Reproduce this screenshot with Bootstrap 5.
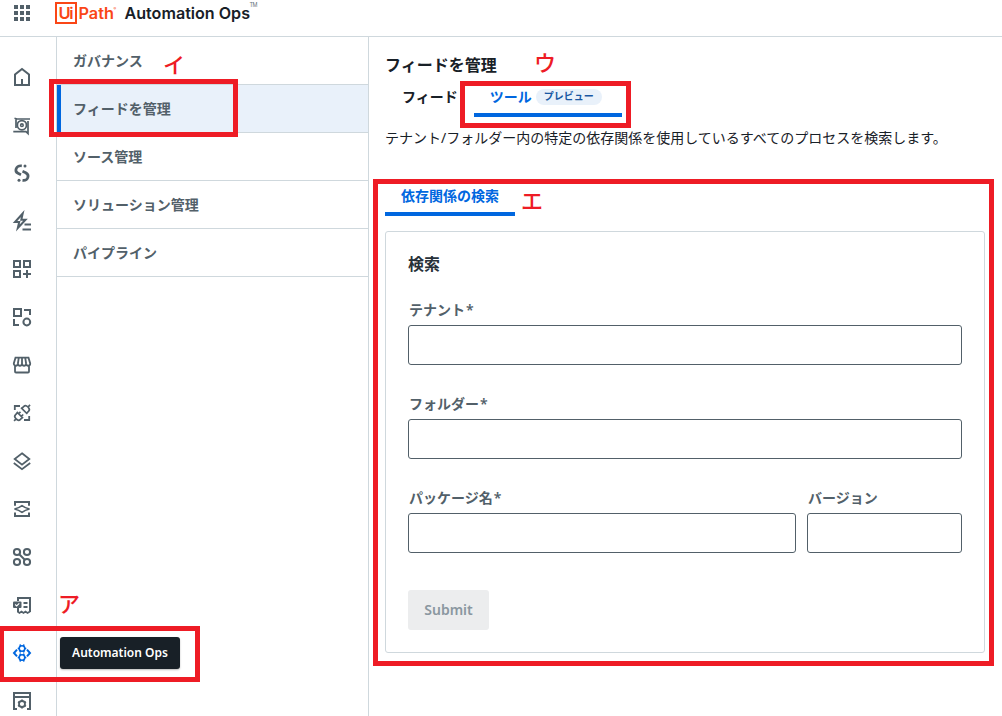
<!DOCTYPE html>
<html lang="ja">
<head>
<meta charset="utf-8">
<meta name="viewport" content="width=device-width, initial-scale=1">
<title>Automation Ops</title>
<link rel="stylesheet" href="https://cdn.jsdelivr.net/npm/bootstrap@5.3.0/dist/css/bootstrap.min.css">
<style>
:root{--line:#cfd8dd;--slate:#526069;--ink:#182027;--blue:#0067df;--pale:#e9f1fa;--red:#ee1c25}
body{font-family:"Noto Sans","Noto Sans CJK JP",sans-serif;font-size:14px;line-height:20px;color:var(--ink);width:1002px;height:716px;overflow:hidden;position:relative}
.topbar{height:37px;border-bottom:1px solid var(--line)}
.topbar svg{display:block}
.shell{height:679px}
.rail{width:57px;border-right:1px solid var(--line);padding-top:16px;overflow:hidden}
.rail a{height:48px;flex-shrink:0;padding-left:10px;color:var(--slate)}
.rail a.active{color:var(--blue)}
.rail svg{width:24px;height:24px;fill:none;stroke:currentColor;stroke-width:2}
.sections{width:312px;border-right:1px solid var(--line)}
.sections .list-group-item{height:48px;border:0;border-bottom:1px solid var(--line)!important;padding:0 16px;color:var(--slate);font-weight:600;border-radius:0}
.sections .list-group-item.active{background:var(--pale);color:var(--slate);box-shadow:inset 4px 0 var(--blue);margin:0;z-index:0}
.workspace{padding:0 16px;flex:1}
h1{font-size:16px;line-height:24px;font-weight:600;margin:16px 0 0}
.tabs{height:40px}
.tabs .nav-link{padding:10px 16px 0;color:var(--ink);font-weight:600;height:40px;border-bottom:4px solid transparent;white-space:nowrap;line-height:20px}
.tabs .nav-link.active{color:var(--blue);border-color:var(--blue)}
.preview{background:var(--pale);color:#1a58a3;font-size:10px;line-height:15px;font-weight:600;border-radius:8px;padding:0 8px;height:16px;margin:2px 4px 0 0}
.search-box{width:600px;height:422px;border:1px solid var(--line);border-radius:3px;padding:0 22px;margin-top:15px}
.search-box h2{font-size:16px;line-height:24px;font-weight:600;color:#273139;margin:20px 0 24px}
.search-box .form-label{font-size:14px;line-height:20px;font-weight:600;color:var(--slate);margin:0 0 5px 1px;display:block}
.search-box .form-label span{letter-spacing:1px;margin-left:1px}
.search-box .form-control{height:40px;border:1px solid var(--slate);border-radius:3px}
.field{height:94px}
.submit{width:81px;height:40px;border:0;border-radius:3px;background:#ecedee!important;color:#8a97a0!important;font-size:14px;line-height:20px;font-weight:600;opacity:1!important;padding:0 0 1px;display:block;margin-top:8px}
.frame{position:absolute;border:5px solid var(--red);pointer-events:none;z-index:5}
.letter{position:absolute;color:var(--red);font:500 22px/24px "Noto Sans CJK JP",sans-serif}
.tip{position:absolute;left:60px;top:637px;width:120px;height:32px;border-radius:3px;background:#182027;color:#fff;font-size:12px;line-height:32px;font-weight:600;text-align:center;box-shadow:0 1px 2px #0004}
</style>
</head>
<body class="bg-white">
<header class="topbar">
<svg width="300" height="36" role="img" aria-label="UiPath Automation Ops">
<path fill="#526069" d="M14 5h4v4h-4zm6 0h4v4h-4zm6 0h4v4h-4zM14 11h4v4h-4zm6 0h4v4h-4zm6 0h4v4h-4zM14 17h4v4h-4zm6 0h4v4h-4zm6 0h4v4h-4z"/>
<rect x="56" y="3" width="20" height="20" fill="none" stroke="#fa4616" stroke-width="2"/>
<g font-family="Inter,sans-serif" font-weight="600">
<text x="58.5" y="18.8" font-size="16.5" fill="#fa4616" textLength="15">Ui</text>
<text x="78.5" y="18.8" font-size="15.5" fill="#fa4616" textLength="35.5" lengthAdjust="spacingAndGlyphs">Path</text>
<text x="113.500" y="9.500" font-size="4" fill="#fa4616">®</text>
<text x="124.500" y="19" font-size="16" fill="#182027" textLength="125.500" lengthAdjust="spacingAndGlyphs">Automation Ops</text>
<text x="249.500" y="7" font-size="5.500" font-weight="400" fill="#69757d" textLength="8">TM</text>
</g>
</svg>
</header>
<div class="d-flex shell">
<nav class="rail d-flex flex-column flex-shrink-0" aria-label="サービス">
<a class="d-flex align-items-center"><svg viewBox="0 0 24 24"><path d="M5 20V9.500L12 4l7 5.500V20zM12 14v6"/></svg></a>
<a class="d-flex align-items-center"><svg viewBox="0 0 24 24"><path stroke-width="1.700" d="M4.500 5.300L7 6h13M18 8v12.500L16 18.600H3.300M6 5.500V15"/><circle cx="11.900" cy="12.200" r="4.600" stroke-width="1.800"/><circle cx="11.900" cy="12.200" r="1.300" stroke-width="1.600"/></svg></a>
<a class="d-flex align-items-center"><svg viewBox="0 0 24 24"><path stroke-width="2.700" d="M11.800 4.800C5.500 4.200 4.300 10.500 8 12.300L11 13.700M12.500 10.300L15.700 11.700C19.900 14 18.300 20 12.500 19.300"/><g fill="currentColor" stroke="none"><circle cx="15" cy="4.900" r="1.500"/><circle cx="9" cy="19.200" r="1.500"/></g></svg></a>
<a class="d-flex align-items-center"><svg viewBox="0 0 24 24"><path stroke-width="2" d="M12.700 4.500L5 13h4.200L7.800 19L15.500 10.800h-4.200z"/><path d="M14.500 15.500H21M12.500 20.500H21"/></svg></a>
<a class="d-flex align-items-center"><svg viewBox="0 0 24 24"><path d="M4 4h6v6H4zM14 4h6v6h-6zM4 14h6v6H4zM17 13v8M13 17h8"/></svg></a>
<a class="d-flex align-items-center"><svg viewBox="0 0 24 24"><path d="M4 4h7v7H4zM14 5h6v5M4 14v6h5"/><circle cx="16.800" cy="17" r="3.400"/></svg></a>
<a class="d-flex align-items-center"><svg viewBox="0 0 24 24"><path stroke-width="1.800" d="M5.500 4.700h13l1.700 5.800c0 3-4 3-4.100 0c-.1 3-4 3-4.100 0c-.1 3-4 3-4.100 0c-.1 3-4.100 3-4.100 0zM8.800 4.700l-.9 5.800M12 4.700v5.800M15.200 4.700l.9 5.800M5 12.500v6q0 1 1 1h12q1 0 1-1v-6"/></svg></a>
<a class="d-flex align-items-center"><svg viewBox="0 0 24 24"><path stroke-width="1.800" d="M4.800 9V5H10M19.200 15v4H14"/><g stroke-width="1.700"><path transform="translate(15.800 8.200) rotate(45)" d="M-4.500 2.300h9M-3.400 2.300v-3q0-2.400 3.400-2.400t3.400 2.400v3M0-3v-3"/><path transform="translate(8.300 15.700) rotate(225)" d="M-4.500 2.300h9M-3.400 2.300v-3q0-2.400 3.400-2.400t3.400 2.400v3M0-3v-3M-1.900 2.300v2.700M1.900 2.300v2.700"/></g></svg></a>
<a class="d-flex align-items-center"><svg viewBox="0 0 24 24"><path stroke-width="1.800" d="M12 4.300l7.300 5.700L12 15.700l-7.300-5.700zM3.800 14L12 20.200l8.200-6.200"/></svg></a>
<a class="d-flex align-items-center"><svg viewBox="0 0 24 24"><path d="M5 8.700V5h14v3.700M5 15.500V19h14v-3.500"/><path stroke-width="1.700" d="M4.500 12Q9 11 12 8.700Q15 11 19.500 12Q15 13 12 15.300Q9 13 4.500 12z"/></svg></a>
<a class="d-flex align-items-center"><svg viewBox="0 0 24 24"><g><circle cx="7" cy="7" r="3.100"/><circle cx="17" cy="7" r="3.100"/><circle cx="7" cy="17" r="3.100"/><circle cx="17" cy="17" r="3.100"/><path d="M9 9l6 6"/></g></svg></a>
<a class="d-flex align-items-center"><svg viewBox="0 0 24 24"><path d="M8 8V5h12v14M8 15v4M13.500 10h4M13.500 14h4"/><path stroke-width="1.700" d="M7.500 18.500l2 1.500 2-1.500 2 1.500 2-1.500 2 1.500 2.500-1.500"/><rect x="3" y="8.500" width="8.500" height="6.500" rx="1" fill="currentColor" stroke="none"/><path stroke="#fff" stroke-width="1.100" d="M5.200 11.500l1.500 1.500L9.300 10.300"/></svg></a>
<a class="d-flex align-items-center active"><svg viewBox="0 0 24 24"><path stroke-width="2" d="M7 8.600L4 12l3 3.400M17 8.600l3 3.400-3 3.400"/><g stroke-width="1.600"><circle cx="12" cy="7.500" r="2.800"/><circle cx="12" cy="16.500" r="2.800"/></g><path stroke-width="1.700" d="M10.700 5.200l-.7-1.700M13.300 5.200l.7-1.700M9.300 7.500H7.700M14.700 7.500h1.600M10.700 10l-.9 1.400M13.300 10l.9 1.400M10.700 14l-.9-1.400M13.300 14l.9-1.400M9.300 16.500H7.700M14.700 16.500h1.600M10.700 18.800l-.7 1.700M13.300 18.800l.7 1.700"/></svg></a>
<a class="d-flex align-items-center"><svg viewBox="0 0 24 24"><path d="M7 20H4V4h16v16h-3M4 8h16"/><circle cx="12" cy="15" r="3" stroke-width="1.800"/><path stroke-width="1.800" d="M12 12.300v-1.800M12 17.700v1.800M9.700 13.700l-1.600-1M14.300 13.700l1.600-1M9.700 16.300l-1.600 1M14.300 16.300l1.600 1"/></svg></a>
</nav>
<div class="sections list-group list-group-flush flex-shrink-0">
<a class="list-group-item d-flex align-items-center">ガバナンス</a>
<a class="list-group-item active d-flex align-items-center">フィードを管理</a>
<a class="list-group-item d-flex align-items-center">ソース管理</a>
<a class="list-group-item d-flex align-items-center">ソリューション管理</a>
<a class="list-group-item d-flex align-items-center">パイプライン</a>
</div>
<main class="workspace">
<h1>フィードを管理</h1>
<div class="tabs nav flex-nowrap ps-1">
<a class="nav-link" style="padding-left:13px">フィード</a>
<a class="nav-link active d-flex gap-1">ツール <span class="preview">プレビュー</span></a>
</div>
<p class="mb-0" style="margin-top:11px">テナント/フォルダー内の特定の依存関係を使用しているすべてのプロセスを検索します。</p>
<div class="tabs nav" style="margin-top:28px"><a class="nav-link active">依存関係の検索</a></div>
<form class="search-box">
<h2>検索</h2>
<div class="field"><label class="form-label" for="tenant">テナント<span>*</span></label><input class="form-control" id="tenant"></div>
<div class="field"><label class="form-label" for="folder">フォルダー<span>*</span></label><input class="form-control" id="folder"></div>
<div class="d-flex field">
<div style="width:388px;margin-right:11px"><label class="form-label" for="package">パッケージ名<span>*</span></label><input class="form-control" id="package"></div>
<div style="width:155px"><label class="form-label" for="version">バージョン</label><input class="form-control" id="version"></div>
</div>
<button class="btn submit" type="button" disabled>Submit</button>
</form>
</main>
</div>
<div class="tip">Automation Ops</div>
<div class="frame" style="left:49px;top:79px;width:189px;height:58px"></div>
<div class="frame" style="left:460px;top:81px;width:171px;height:47px"></div>
<div class="frame" style="left:373px;top:179px;width:621px;height:487px"></div>
<div class="frame" style="left:-1px;top:626px;width:201px;height:56px"></div>
<span class="letter" style="left:163px;top:51px">イ</span>
<span class="letter" style="left:534px;top:49px">ウ</span>
<span class="letter" style="left:521px;top:187px">エ</span>
<span class="letter" style="left:58px;top:590px">ア</span>
<script src="https://cdn.jsdelivr.net/npm/bootstrap@5.3.0/dist/js/bootstrap.bundle.min.js"></script>
</body>
</html>
